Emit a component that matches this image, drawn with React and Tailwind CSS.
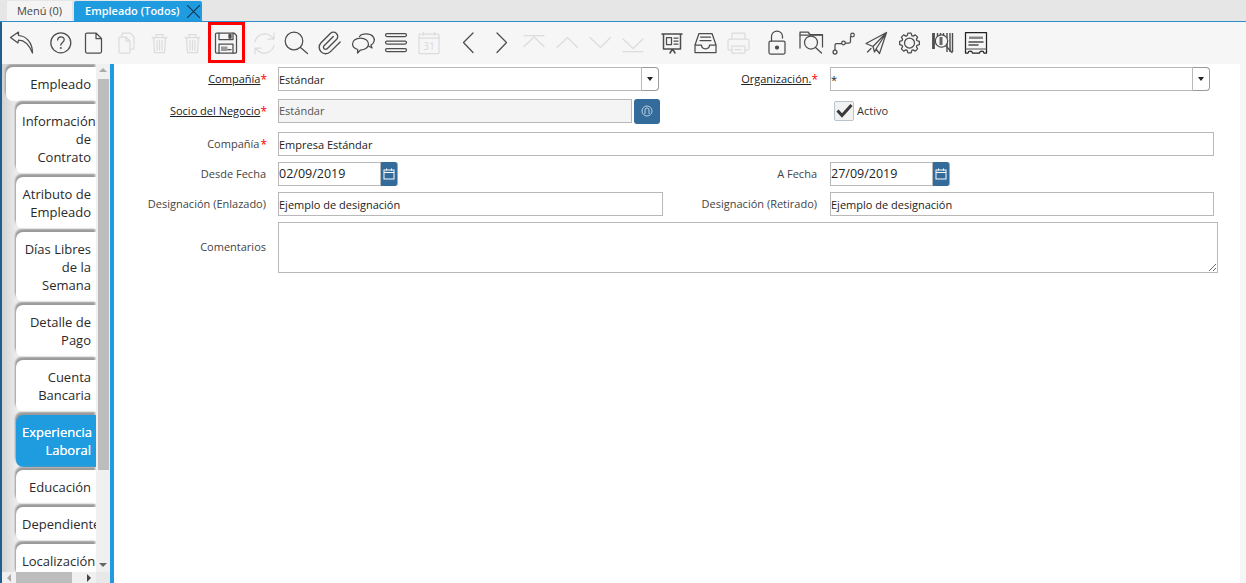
import React from 'react';

// eight soft teeth around the centre of the toolbar box
const gearPath = () => {
  const pts = [];
  for (let i = 0; i < 8; i++) {
    const a = (i * Math.PI) / 4 - Math.PI / 2;
    [[-0.3, 7.8], [-0.16, 10], [0.16, 10], [0.3, 7.8]].forEach(([d, r]) => {
      pts.push(`${(16.5 + r * Math.cos(a + d)).toFixed(2)} ${(16 + r * Math.sin(a + d)).toFixed(2)}`);
    });
  }
  return `M${pts.join('L')}Z`;
};

const Icon = ({ children, off }) => (
  <svg
    viewBox="0 0 33 33"
    width="33"
    height="33"
    fill="none"
    stroke={off ? '#dcdcdc' : '#4d4d4d'}
    strokeWidth="1.25"
    strokeLinecap="round"
    strokeLinejoin="round"
  >
    {children}
  </svg>
);

const icons = {
  undo: <path d="M13.5 5 5.5 10.5 13 16l.5-3c5.5 0 10.5 4 14 13 0-11-6.500-17-14-17.500z" />,
  help: (
    <>
      <circle cx="16.8" cy="15.8" r="10" />
      <path d="M13.6 13c.3-4.2 6.6-4.2 6.6-.2 0 2.6-3.4 2.8-3.4 5.4" />
      <circle cx="16.8" cy="21" r=".4" />
    </>
  ),
  page: <path d="M8.5 7.5A1.5 1.5 0 0 1 10 6h9l5.5 5.5v13a1.5 1.5 0 0 1-1.5 1.5H10a1.5 1.5 0 0 1-1.5-1.5zM19 6v5.5h5.5" />,
  copy: (
    <>
      <path d="M12 10V7a1 1 0 0 1 1-1h7l4 4v11a1 1 0 0 1-1 1h-2" />
      <path d="M9 11a1 1 0 0 1 1-1h6l4 4v11a1 1 0 0 1-1 1h-9a1 1 0 0 1-1-1zM16 10v4h4" />
    </>
  ),
  trash: (
    <>
      <path d="M9 10.5h15M13 10V7.5h7V10M10.5 11l1 14.5h10l1-14.5" />
      <path d="M14 13.5V23M16.5 13.5V23M19 13.5V23" />
    </>
  ),
  save: (
    <>
      <path d="M6.5 7a1 1 0 0 1 1-1H25l2.5 2.5V25a1 1 0 0 1-1 1h-19a1 1 0 0 1-1-1z" />
      <path d="M10 6v6.5h14V6" />
      <path d="M20 7.5h2V11h-2z" fill="#4d4d4d" />
      <path d="M10 26v-9h14v9" />
      <path d="M12 19.5h6.5V24H12z" fill="#9a9a9a" stroke="none" />
      <path d="M19 22.5h3" />
    </>
  ),
  refresh: (
    <>
      <path d="M7 15a10 10 0 0 1 16.5-5.500l2 2M26 6v6h-6" />
      <path d="M26 18a10 10 0 0 1-16.5 5.5l-2-2M7 27v-6h6" />
    </>
  ),
  search: (
    <>
      <circle cx="13" cy="14" r="8.8" />
      <path d="M19.5 20.5 26.5 26.5" />
    </>
  ),
  clip: (
    <path
      transform="translate(3 3) scale(1.08)"
      d="m21.44 11.05-9.19 9.19a6 6 0 0 1-8.49-8.49l8.57-8.57A4 4 0 1 1 18 8.84l-8.59 8.57a2 2 0 0 1-2.83-2.83l8.49-8.48"
    />
  ),
  chat: (
    <>
      <path d="M12.5 9.5C15 6 23 6 26 9.5c2.5 3 1 7-2 8.5l1 3-3.5-2" />
      <path d="M13.5 11c4.5 0 8 2.5 8 6s-3.5 6-8 6l-3 3 .2-3.5C7.5 21.5 5.5 19.5 5.5 17c0-3.5 3.5-6 8-6z" />
    </>
  ),
  menu: (
    <>
      <rect x="5.5" y="6.5" width="21" height="3" rx="1.5" />
      <rect x="5.5" y="14" width="21" height="3" rx="1.5" />
      <rect x="5.5" y="21.5" width="21" height="3" rx="1.5" />
    </>
  ),
  calendar: (
    <>
      <rect x="6" y="7" width="20" height="19.5" rx="1" />
      <path d="M6 11h20M10.5 5v3M21.5 5v3" />
      <text x="16" y="23" textAnchor="middle" fontSize="10" stroke="none" fill="#d9d9d9" fontFamily="Open Sans, sans-serif">31</text>
    </>
  ),
  prev: <path d="M21 6 11.5 15.5 21 25.5" />,
  next: <path d="M12 6l9.5 9.5L12 25.5" />,
  first: <path d="M6 8.500h20M6 19.5l10-9.5 10 9.5" />,
  up: <path d="M6 20.5l10.5-10 10 10" />,
  down: <path d="M6 10.5l10.5 10 10-10" />,
  last: <path d="M6 12l10 9.5L26 12M6 24.5h20" />,
  board: (
    <>
      <path d="M6 7h20M7.5 7v15h17V7M14 26l2.5-4 2.5 4" strokeWidth="1.5" />
      <path d="M10.5 10.5h5v7h-5zM18 11h4M18 14h4M18 17h4" />
    </>
  ),
  inbox: (
    <>
      <path d="M6 18 10 6.5h13L27 18v7.5H6zM6 18h6.5c0 5 8 5 8 0H27" />
      <path d="M11.5 10h10M11 13.5h11" />
    </>
  ),
  print: (
    <>
      <path d="M10 12V6h13v6M10 23H7.5A1.5 1.5 0 0 1 6 21.5v-8A1.5 1.5 0 0 1 7.5 12h18a1.5 1.5 0 0 1 1.5 1.5v8a1.5 1.5 0 0 1-1.5 1.5H23" />
      <path d="M10 19h13v7H10zM13 22.5h6" />
    </>
  ),
  lock: (
    <>
      <rect x="8" y="14" width="16" height="13" rx="1.5" />
      <path d="M10.5 14V9.5a5.5 5.5 0 0 1 11 0V11" />
      <circle cx="16" cy="20.5" r="1.5" fill="#4d4d4d" />
    </>
  ),
  folder: (
    <>
      <path d="M6 21V5h8l2 2.5h12.5V20" />
      <path d="M6 8h22" />
      <circle cx="17" cy="15.5" r="6.5" />
      <path d="M21.5 20.5 27.5 26" />
    </>
  ),
  flow: (
    <>
      <circle cx="8" cy="25" r="2" />
      <circle cx="16.5" cy="16" r="1.8" />
      <circle cx="25.5" cy="8" r="1.8" />
      <path d="M8 23v-5a1.5 1.5 0 0 1 1.5-1.5h5M18.3 16H22a1.5 1.5 0 0 0 1.5-1.5v-5" />
    </>
  ),
  send: <path d="M26.5 5.5 6 16.5l7 3zM26.5 5.5 16 22l3.5 4.5zM13 19.5l1.5 5.5 2-3.500M7.500 25l3.500-3.500" />,
  gear: (
    <>
      <path d={gearPath()} />
      <circle cx="16.5" cy="16" r="5" />
    </>
  ),
  barcode: (
    <>
      <path d="M7.5 6v16" strokeWidth="2.8" strokeLinecap="butt" />
      <path d="M11.5 6v4M14.5 6v4M17.5 6v4M21 6v19M24 6v19M26.5 6v19" strokeWidth="1.4" strokeLinecap="butt" />
      <circle cx="15.5" cy="14" r="6.2" fill="#f6f6f6" />
      <path d="M15 10v8" strokeWidth="3" strokeLinecap="butt" stroke="#666" />
      <path d="M20 19l6 6.5" />
    </>
  ),
  receipt: (
    <>
      <path d="M6.5 5.5h21V26H25a2.3 2.3 0 0 0-4.5 0h-7a2.3 2.3 0 0 0-4.500 0H6.5z" stroke="#222" />
      <path d="M10 9.5h14V12H10z" fill="#888" stroke="none" />
      <path d="M10 15h14M10 18h9" strokeWidth="1.5" />
      <path d="M6.5 22h21" strokeWidth="1" />
    </>
  ),
};

// gap marks the 6px break before a group of toolbar buttons
const toolbar = [
  { name: 'undo' },
  { name: 'help', gap: true },
  { name: 'page' },
  { name: 'copy', off: true },
  { name: 'trash', off: true },
  { name: 'trash', off: true },
  { name: 'save', mark: true },
  { name: 'refresh', off: true, gap: true },
  { name: 'search' },
  { name: 'clip' },
  { name: 'chat' },
  { name: 'menu' },
  { name: 'calendar', off: true },
  { name: 'prev', gap: true },
  { name: 'next' },
  { name: 'first', off: true },
  { name: 'up', off: true },
  { name: 'down', off: true },
  { name: 'last', off: true },
  { name: 'board', gap: true },
  { name: 'inbox' },
  { name: 'print', off: true },
  { name: 'lock', gap: true },
  { name: 'folder' },
  { name: 'flow' },
  { name: 'send' },
  { name: 'gear' },
  { name: 'barcode' },
  { name: 'receipt' },
];

const tabs = [
  { lines: ['Empleado'], first: true },
  { lines: ['Información', 'de', 'Contrato'] },
  { lines: ['Atributo de', 'Empleado'] },
  { lines: ['Días Libres', 'de la', 'Semana'] },
  { lines: ['Detalle de', 'Pago'] },
  { lines: ['Cuenta', 'Bancaria'] },
  { lines: ['Experiencia', 'Laboral'], active: true },
  { lines: ['Educación'] },
  { lines: ['Dependiente'] },
  { lines: ['Localización'] },
];

const Label = ({ text, required, link, className }) => (
  <div className={`flex items-center justify-end text-[11px] text-[#444] ${className}`}>
    <span className={link ? 'underline text-[#222]' : 'pr-[1px]'}>{text}</span>
    {required && <span className="self-start mt-[1px] text-[#f00] text-[12px] leading-[16px]">*</span>}
  </div>
);

const TextInput = ({ value, className = '' }) => (
  <div className={`h-[24px] flex items-center pt-[2px] border border-[#b8b8b8] text-[11px] ${className}`}>{value}</div>
);

const Combo = ({ value, className }) => (
  <div className={`h-[24px] flex ${className}`}>
    <div className="flex-1 flex items-center pt-[2px] border border-[#b8b8b8] text-[11px] text-[#222]">{value}</div>
    <div className="w-[17px] flex items-center justify-center border border-l-0 border-[#999] rounded-r-[4px] bg-white">
      <span className="w-0 h-0 border-x-[3.5px] border-x-transparent border-t-[4px] border-t-[#222]" />
    </div>
  </div>
);

const DateInput = ({ value }) => (
  <div className="h-[24px] w-[120px] flex">
    <div className="w-[103px] flex items-center pt-[1px] border border-[#b8b8b8] text-[12.5px] text-[#222]">{value}</div>
    <div className="w-[17px] flex items-center justify-center bg-[#336b9b] border-r border-[#9ab] rounded-r-[3px]">
      <svg viewBox="0 0 12 12" width="12" height="12" fill="none" stroke="#fff" strokeWidth="1">
        <rect x="1" y="2" width="10" height="9" />
        <path d="M1 4.5h10M3.5 .5v2M8.5 .5v2" />
      </svg>
    </div>
  </div>
);

const App = () => (
  <div
    className="w-[1246px] h-[583px] overflow-hidden flex flex-col bg-white"
    style={{ fontFamily: '"Open Sans", sans-serif' }}
  >
    <div className="h-[22px] shrink-0 flex items-end gap-[2px] pl-[7px] bg-[#e6e6e6] border-b border-[#2b8fce]">
      <div className="w-[65px] h-[20px] flex items-center justify-center bg-[#f4f4f4] text-[11px] text-[#444]">Menú (0)</div>
      <div className="w-[128px] h-[20px] flex items-center pl-[11px] gap-[7px] bg-[#1f9ce0] text-white text-[11px] font-semibold rounded-t-[2px]">
        Empleado (Todos)
        <svg viewBox="0 0 12 12" width="13" height="13" fill="none" stroke="#12344d" strokeWidth="1">
          <path d="M0 0l12 12M12 0 0 12" />
        </svg>
      </div>
    </div>

    <div className="flex-1 min-h-0 flex flex-col border-l-2 border-[#1d5f8f]">
      <div className="h-[42px] shrink-0 flex items-center pl-[2.5px] bg-[#f6f6f6]">
        {toolbar.map((item, i) => (
          <div key={i} className={`relative w-[33px] h-[33px] shrink-0 ${item.gap ? 'ml-[6px]' : ''}`}>
            <Icon off={item.off}>{icons[item.name]}</Icon>
            {item.mark && <div className="absolute left-[-0.5px] top-[-4.5px] w-[37px] h-[41px] border-[3px] border-[#f00]" />}
          </div>
        ))}
      </div>

      <div className="flex-1 min-h-0 flex">
        <div className="w-[108px] shrink-0 flex flex-col">
          <div className="flex-1 min-h-0 flex">
            <div className="w-[94px] shrink-0 overflow-hidden flex flex-col items-end gap-[3px] pt-[3px] bg-linear-to-r from-[#d2d2d2] to-[#ececec] to-[14px]">
              {tabs.map((tab) => (
                <div
                  key={tab.lines[0]}
                  className={`shrink-0 py-[8px] pr-[5px] rounded-l-[7px] text-[13px] leading-[18px] shadow-[-1px_-3px_2px_#9a9a9a] ${tab.first ? 'w-[90px] pl-[16px]' : 'w-[80px] pl-[6px]'} ${tab.active ? 'bg-[#1f9ce0] text-white [text-shadow:0_0_0.6px_#fff]' : 'bg-white text-[#2a2a2a]'}`}
                >
                  {tab.lines.map((line) => (
                    <div key={line} className="text-right whitespace-nowrap">{line}</div>
                  ))}
                </div>
              ))}
            </div>
            <div className="w-[14px] shrink-0 flex flex-col items-center bg-[#f0f0f0]">
              <span className="mt-[4px] w-0 h-0 border-x-[4px] border-x-transparent border-b-[4px] border-b-[#aaa]" />
              <div className="mt-[7px] w-[11px] h-[391px] bg-[#bdbdbd]" />
              <span className="mt-[93px] w-0 h-0 border-x-[4px] border-x-transparent border-t-[4px] border-t-[#666]" />
            </div>
          </div>
          <div className="h-[11px] shrink-0 flex items-center bg-[#f0f0f0]">
            <span className="ml-[5px] w-0 h-0 border-y-[4px] border-y-transparent border-r-[4px] border-r-[#aaa]" />
            <div className="ml-[5px] w-[56px] h-full bg-[#bdbdbd]" />
            <span className="ml-[15px] w-0 h-0 border-y-[4px] border-y-transparent border-l-[4px] border-l-[#444]" />
            <div className="ml-auto w-[14px] h-full bg-[#e8e8e8]" />
          </div>
        </div>

        <div className="w-[4px] shrink-0 bg-[#1f9ce0]" />

        <div className="w-[1126px] shrink-0 flex flex-col pt-[3px]">
          <div className="h-[24px] flex items-center">
            <Label text="Compañía" required link className="w-[153px] mr-[11px]" />
            <Combo value="Estándar" className="w-[381px] mr-[4px]" />
            <Label text="Organización." required link className="w-[155px] mr-[12px]" />
            <Combo value="*" className="w-[380px]" />
          </div>
          <div className="h-[24px] flex items-center mt-[8px]">
            <Label text="Socio del Negocio" required link className="w-[153px] mr-[11px]" />
            <div className="w-[385px] flex items-start gap-[2px]">
              <TextInput value="Estándar" className="w-[354px] bg-[#f4f4f4] text-[#555]" />
              <div className="w-[26px] h-[25px] flex items-center justify-center bg-[#336b9b] rounded-[3px]">
                <svg viewBox="0 0 12 12" width="12" height="12" fill="none" stroke="#b9cfe0" strokeWidth="1">
                  <circle cx="6" cy="6" r="5" />
                  <path d="M4 9V5a2 2 0 0 1 4 0v4" />
                </svg>
              </div>
            </div>
            <div className="ml-[171px] flex items-center gap-[3px] text-[11px] text-[#333]">
              <div className="w-[20px] h-[20px] flex items-center justify-center bg-[#f2f2f2] border border-[#b8c4cc] rounded-[2px]">
                <svg viewBox="0 0 18 18" width="18" height="18" fill="none" stroke="#3a3a3a" strokeWidth="3">
                  <path d="M2.5 8.5 7 13.5 16.5 3" />
                </svg>
              </div>
              Activo
            </div>
          </div>
          <div className="flex items-center mt-[9px]">
            <Label text="Compañía" required className="w-[153px] mr-[11px]" />
            <TextInput value="Empresa Estándar" className="w-[936px] text-[#222]" />
          </div>
          <div className="flex items-center mt-[6px]">
            <Label text="Desde Fecha" className="w-[153px] mr-[11px]" />
            <div className="w-[385px]">
              <DateInput value="02/09/2019" />
            </div>
            <Label text="A Fecha" className="w-[155px] mr-[12px]" />
            <DateInput value="27/09/2019" />
          </div>
          <div className="flex items-center mt-[6px]">
            <Label text="Designación (Enlazado)" className="w-[153px] mr-[11px]" />
            <TextInput value="Ejemplo de designación" className="w-[385px] text-[#222]" />
            <Label text="Designación (Retirado)" className="w-[155px] mr-[12px]" />
            <TextInput value="Ejemplo de designación" className="w-[384px] text-[#222]" />
          </div>
          <div className="flex items-center mt-[6px]">
            <Label text="Comentarios" className="w-[153px] mr-[11px]" />
            <textarea readOnly className="w-[940px] h-[51px] border border-[#b8b8b8] outline-none" />
          </div>
        </div>

        <div className="flex-1 bg-[#f6f6f6]" />
      </div>
    </div>
  </div>
);

export default App;
